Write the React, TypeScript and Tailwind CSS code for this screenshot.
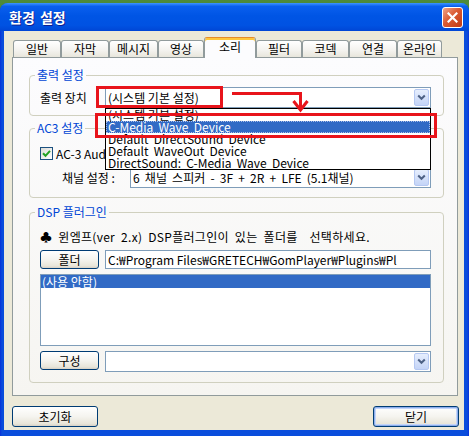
import React from "react";

const F = "font-['Noto_Sans_CJK_KR','Noto_Sans',sans-serif]";

function Tab({ label, className, selected }: { label: string; className: string; selected?: boolean }) {
  if (selected) {
    return (
      <div
        className={`relative z-10 -mb-[1px] flex h-[21px] items-center justify-center rounded-t-[3px] border border-b-0 border-[#919B9C] border-t-[#E68B2C] bg-[#FCFCFE] pb-[2px] text-[12px] leading-none text-black shadow-[inset_0_2px_0_#FFC73C] ${className}`}
      >
        {label}
      </div>
    );
  }
  return (
    <div
      className={`flex h-[17px] items-center justify-center rounded-t-[3px] border border-b-0 border-[#919B9C] bg-[linear-gradient(to_bottom,#FFFFFF,#F3F2EE_60%,#E8E6DC)] text-[12px] leading-none text-black ${className}`}
    >
      {label}
    </div>
  );
}

function ArrowBtn() {
  return (
    <div className="mr-[1px] flex h-[17px] w-[15px] shrink-0 items-center justify-center rounded-[2px] border border-[#B5C8F2] bg-[linear-gradient(to_bottom,#E6EEFD,#C4D4F7)]">
      <svg width="9" height="7" viewBox="0 0 9 7">
        <path d="M1.2 1.5 L4.5 4.8 L7.8 1.5" fill="none" stroke="#4D6185" strokeWidth="2" />
      </svg>
    </div>
  );
}

function Combo({ className, text, spaced }: { className: string; text?: string; spaced?: boolean }) {
  return (
    <div className={`flex h-[21px] items-center border border-[#7F9DB9] bg-white ${className}`}>
      <span
        className={`min-w-0 flex-1 overflow-hidden whitespace-pre pl-[2px] text-[12px] leading-[14px] text-black ${
          spaced ? "[word-spacing:2.5px]" : ""
        }`}
      >
        {text}
      </span>
      <ArrowBtn />
    </div>
  );
}

function XPButton({ label, className, def }: { label: string; className: string; def?: boolean }) {
  return (
    <div
      className={`flex items-center justify-center rounded-[3px] border border-[#003C74] bg-[linear-gradient(to_bottom,#FFFFFF,#F5F4EF_50%,#E8E5D9_88%,#D6D0C5)] text-[12px] leading-none text-black ${
        def ? "shadow-[inset_0_0_0_1px_#8DAEEC,inset_0_0_0_2px_#C3D5F8]" : ""
      } ${className}`}
    >
      {label}
    </div>
  );
}

function Legend({ label }: { label: string }) {
  return <legend className="ml-[5px] px-[2px] text-[12px] leading-[14px] text-[#0046D5]">{label}</legend>;
}

export default function App() {
  return (
    <div
      className={`relative h-[436px] w-[469px] overflow-hidden bg-[linear-gradient(to_bottom,#4E8A3A,#2F6B25)] pt-[3px] ${F}`}
    >
      <div className="flex h-[433px] w-[469px] flex-col rounded-t-[8px] bg-[linear-gradient(to_right,#0831D9,#0A4DDC_2px,#0A4DDC_calc(100%-2px),#0831D9)]">
        {/* Title bar */}
        <div className="flex h-[28px] shrink-0 items-center justify-between rounded-t-[8px] bg-[linear-gradient(to_bottom,#3D95FF,#0A5FEE_12%,#0055E5_45%,#0052E2_80%,#0046D5)] pl-[9px] pr-[6px]">
          <span className="text-[14px] font-bold leading-[16px] text-white [text-shadow:1px_1px_#0F1F8F] [word-spacing:2px]">
            환경 설정
          </span>
          <div className="flex h-[21px] w-[21px] items-center justify-center rounded-[3px] border border-white bg-[linear-gradient(135deg,#F2A58A,#DA5A33_45%,#C13A14)]">
            <svg width="11" height="11" viewBox="0 0 11 11">
              <path d="M1.5 1.5 L9.5 9.5 M9.5 1.5 L1.5 9.5" stroke="white" strokeWidth="2.2" strokeLinecap="square" />
            </svg>
          </div>
        </div>

        {/* Body */}
        <div className="flex flex-1 pb-[6px] pl-[4px] pr-[5px]">
          <div className="flex h-[399px] w-[460px] flex-col bg-[#ECE9D8]">
            {/* Tabs */}
            <div className="ml-[9px] mt-[6px] flex h-[20px] items-end">
              <Tab label="일반" className="w-[48px]" />
              <Tab label="자막" className="w-[48px]" />
              <Tab label="메시지" className="w-[49px]" />
              <Tab label="영상" className="w-[46px]" />
              <Tab label="소리" className="w-[52px]" selected />
              <Tab label="필터" className="w-[46px]" />
              <Tab label="코덱" className="w-[47px]" />
              <Tab label="연결" className="w-[48px]" />
              <Tab label="온라인" className="w-[45px]" />
            </div>

            {/* Panel */}
            <div className="ml-[8px] h-[339px] w-[446px] border border-[#919B9C] bg-[linear-gradient(to_bottom,#FCFCFE,#F6F5F1)]">
              {/* 출력 설정 */}
              <fieldset className="m-0 ml-[16px] mt-[10px] w-[415px] rounded-[4px] border border-[#D0D0BF] p-0">
                <Legend label="출력 설정" />
                <div className="pb-[7px] pl-[10px] pr-[12px] pt-[5px]">
                  <div className="flex h-[21px] items-center">
                    <span className="w-[65px] text-[12px] leading-[14px] text-black">출력 장치</span>
                    <Combo className="flex-1" text="(시스템 기본 설정)" />
                  </div>
                </div>
              </fieldset>

              {/* AC3 설정 */}
              <fieldset className="m-0 ml-[16px] mt-[5px] w-[415px] rounded-[4px] border border-[#D0D0BF] p-0">
                <Legend label="AC3 설정" />
                <div className="pb-[9px] pl-[10px] pr-[12px] pt-[12px]">
                  <div className="flex h-[13px] items-center gap-[3px]">
                    <div className="flex h-[13px] w-[13px] items-center justify-center border border-[#1C5180] bg-[linear-gradient(135deg,#DCDCD7,#FFFFFF)]">
                      <svg width="9" height="9" viewBox="0 0 9 9">
                        <path d="M1 4.2 L3.5 6.8 L8 1.8" stroke="#21A121" strokeWidth="2" fill="none" />
                      </svg>
                    </div>
                    <span className="whitespace-nowrap text-[12px] leading-[14px] text-black">AC-3 Audio 출력 사용</span>
                  </div>
                  <div className="mt-[7px] flex h-[21px] items-center">
                    <span className="w-[90px] whitespace-pre pl-[22px] text-[12px] leading-[14px] text-black">채널 설정 :</span>
                    <Combo className="flex-1" text="6 채널 스피커 - 3F + 2R + LFE (5.1채널)" spaced />
                  </div>
                </div>
              </fieldset>

              {/* DSP 플러그인 */}
              <fieldset className="m-0 ml-[16px] mt-[7px] w-[415px] rounded-[4px] border border-[#D0D0BF] p-0">
                <Legend label="DSP 플러그인" />
                <div className="pb-[10px] pl-[10px] pr-[12px] pt-[11px]">
                  <div className="h-[14px] whitespace-pre text-[12px] leading-[14px] text-black [word-spacing:3px] tracking-[0.3px]">
                    ♣ 윈엠프(ver 2.x) DSP플러그인이 있는 폴더를  선택하세요.
                  </div>
                  <div className="mt-[6px] flex h-[19px] items-center">
                    <XPButton label="폴더" className="h-[19px] w-[59px]" />
                    <div className="ml-[6px] flex h-[19px] min-w-0 flex-1 items-center overflow-hidden whitespace-nowrap border border-[#7F9DB9] bg-white pl-[2px] text-[12px] leading-[14px] text-black">
                      C:₩Program Files₩GRETECH₩GomPlayer₩Plugins₩Pl
                    </div>
                  </div>
                  <div className="mt-[5px] h-[72px] w-[391px] border border-[#7F9DB9] bg-white">
                    <div className="h-[13px] overflow-hidden bg-[#316AC5] pl-[1px] text-[12px] leading-[13px] text-white">
                      (사용 안함)
                    </div>
                  </div>
                  <div className="mt-[5px] flex items-start">
                    <XPButton label="구성" className="h-[19px] w-[59px]" />
                    <Combo className="ml-[6px] flex-1" text="" />
                  </div>
                </div>
              </fieldset>
            </div>

            {/* Bottom buttons */}
            <div className="mt-[10px] flex justify-between pl-[8px] pr-[5px]">
              <XPButton label="초기화" className="h-[21px] w-[86px]" />
              <XPButton label="닫기" className="h-[21px] w-[86px]" def />
            </div>
          </div>
        </div>
      </div>

      {/* Open dropdown list */}
      <div className="absolute left-[105px] top-[108px] h-[62px] w-[326px] border border-black bg-white text-[12px] leading-[12px] text-black [word-spacing:2.5px]">
        <div className="h-[12px] whitespace-nowrap pl-[2px] [word-spacing:0px]">(시스템 기본 설정)</div>
        <div className="h-[12px] whitespace-nowrap bg-[#316AC5] pl-[2px] text-white outline-1 -outline-offset-1 outline-dotted outline-[#A9BEE8]">
          C-Media Wave Device
        </div>
        <div className="h-[12px] whitespace-nowrap pl-[2px]">Default DirectSound Device</div>
        <div className="h-[12px] whitespace-nowrap pl-[2px]">Default WaveOut Device</div>
        <div className="h-[12px] whitespace-nowrap pl-[2px]">DirectSound: C-Media Wave Device</div>
      </div>

      {/* Red annotations */}
      <svg className="pointer-events-none absolute left-0 top-0" width="469" height="436" viewBox="0 0 469 436">
        <rect x="97.5" y="87.5" width="124" height="19" fill="none" stroke="#E8141B" strokeWidth="3" />
        <rect x="96.5" y="114.5" width="339" height="22" fill="none" stroke="#E8141B" strokeWidth="3" />
        <path d="M232 93.5 H300.5 V109" fill="none" stroke="#E8141B" strokeWidth="3" />
        <path d="M293.5 101 L300.5 110 L307.5 101" fill="none" stroke="#E8141B" strokeWidth="3" />
      </svg>
    </div>
  );
}
